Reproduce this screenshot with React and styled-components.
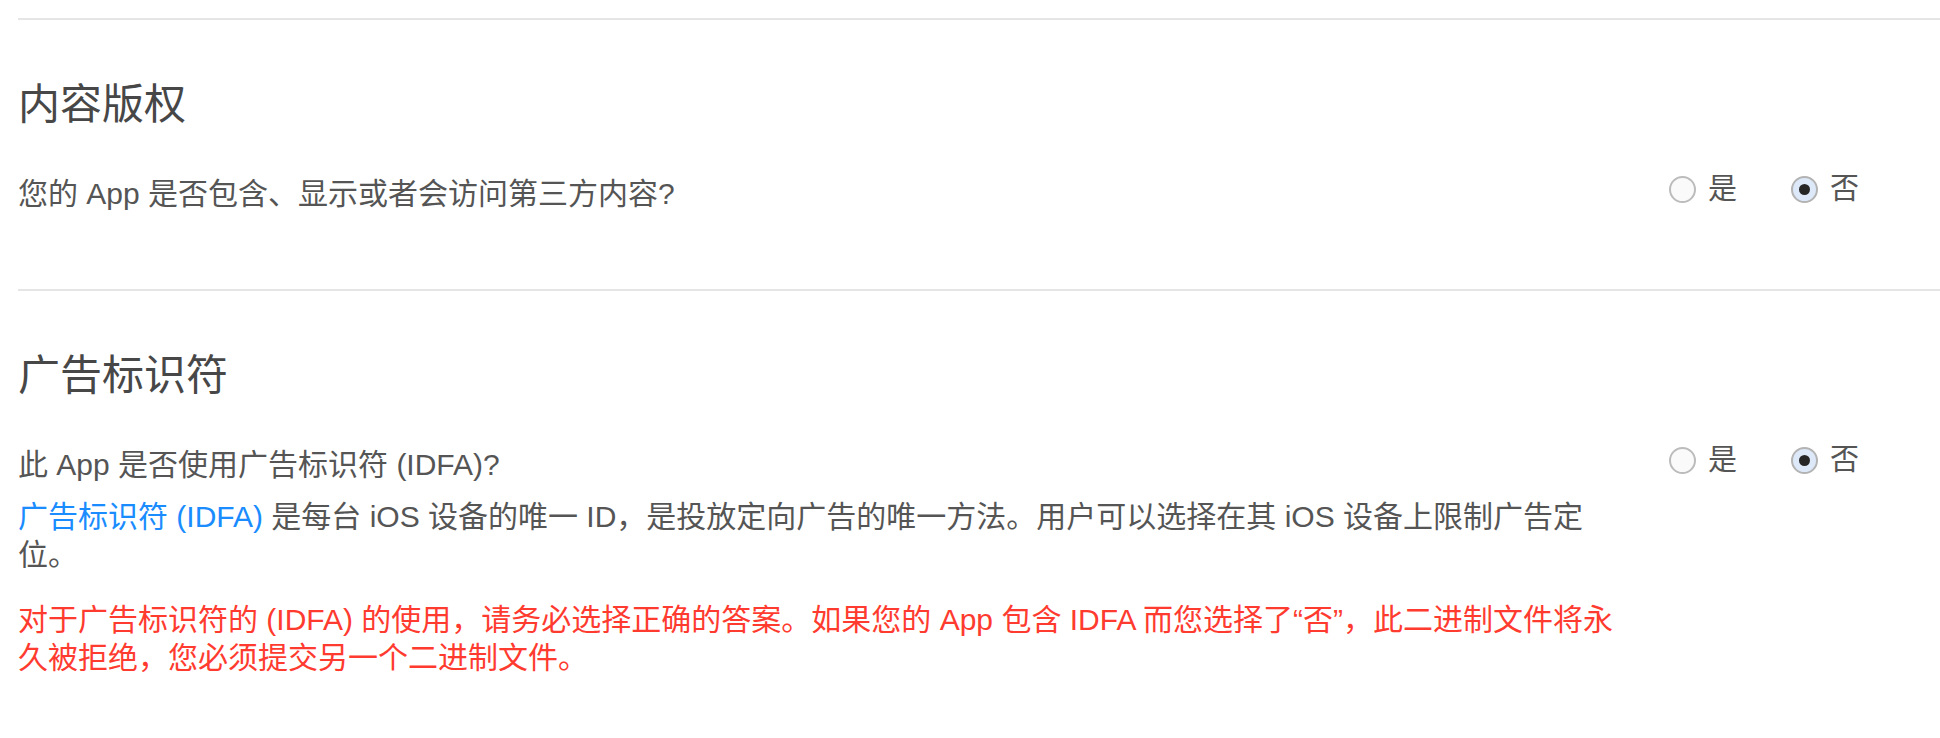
import React, { useState } from 'react';
import styled, { createGlobalStyle } from 'styled-components';

const GlobalStyle = createGlobalStyle`
  html, body {
    margin: 0;
    padding: 0;
    background: #fff;
  }

  body {
    font-family: "Liberation Sans", "Noto Sans CJK SC", sans-serif;
    color: #555;
  }
`;

const Page = styled.div`
  padding: 18px 0 0 18px;
`;

const Section = styled.section`
  border-top: 2px solid #e5e5e5;
  padding: 61px 0 76px;
`;

const Heading = styled.h2`
  margin: 0 0 46px;
  font-size: 42px;
  line-height: 48px;
  font-weight: 400;
  color: #474747;
`;

const Row = styled.div`
  display: flex;
  align-items: flex-start;
`;

const TextCol = styled.div`
  flex: 0 0 1614px;
`;

const Question = styled.p`
  margin: 0;
  font-size: 30px;
  line-height: 38px;
  color: #555;
`;

const Note = styled.p`
  margin: ${(p) => p.$gap}px 0 0;
  font-size: 30px;
  line-height: 38px;
  color: ${(p) => (p.$warn ? '#ff3b30' : '#555')};
`;

const Link = styled.a`
  color: #1a8cff;
  text-decoration: none;
`;

const RadioGroup = styled.div`
  display: flex;
  align-items: center;
  gap: 54px;
  height: 38px;
  margin: -5px 0 0 37px;
`;

const Option = styled.label`
  display: flex;
  align-items: center;
  gap: 12px;
  font-size: 29px;
  line-height: 38px;
  color: #555;
  cursor: pointer;
`;

const Circle = styled.input`
  appearance: none;
  margin: 0;
  width: 27px;
  height: 27px;
  border-radius: 50%;
  border: 2px solid #bcbcbc;
  background: #fafafa;
  box-sizing: border-box;
  display: grid;
  place-items: center;

  &:checked {
    border-color: #b3b3b3;
    background: #dde9f9;
  }

  &:checked::after {
    content: '';
    width: 11px;
    height: 11px;
    border-radius: 50%;
    background: #262626;
  }
`;

function YesNo({ name }) {
  const [value, setValue] = useState('no');
  return (
    <RadioGroup>
      <Option>
        <Circle type="radio" name={name} checked={value === 'yes'} onChange={() => setValue('yes')} />
        是
      </Option>
      <Option>
        <Circle type="radio" name={name} checked={value === 'no'} onChange={() => setValue('no')} />
        否
      </Option>
    </RadioGroup>
  );
}

export default function App() {
  return (
    <Page>
      <GlobalStyle />
      <Section>
        <Heading>内容版权</Heading>
        <Row>
          <TextCol>
            <Question>您的 App 是否包含、显示或者会访问第三方内容?</Question>
          </TextCol>
          <YesNo name="content-rights" />
        </Row>
      </Section>
      <Section>
        <Heading>广告标识符</Heading>
        <Row>
          <TextCol>
            <Question>此 App 是否使用广告标识符 (IDFA)?</Question>
            <Note $gap={14}>
              <Link href="#idfa">广告标识符 (IDFA)</Link> 是每台 iOS 设备的唯一 ID，是投放定向广告的唯一方法。用户可以选择在其 iOS 设备上限制广告定位。
            </Note>
            <Note $gap={27} $warn>
              对于广告标识符的 (IDFA) 的使用，请务必选择正确的答案。如果您的 App 包含 IDFA 而您选择了“否”，此二进制文件将永久被拒绝，您必须提交另一个二进制文件。
            </Note>
          </TextCol>
          <YesNo name="idfa" />
        </Row>
      </Section>
    </Page>
  );
}
